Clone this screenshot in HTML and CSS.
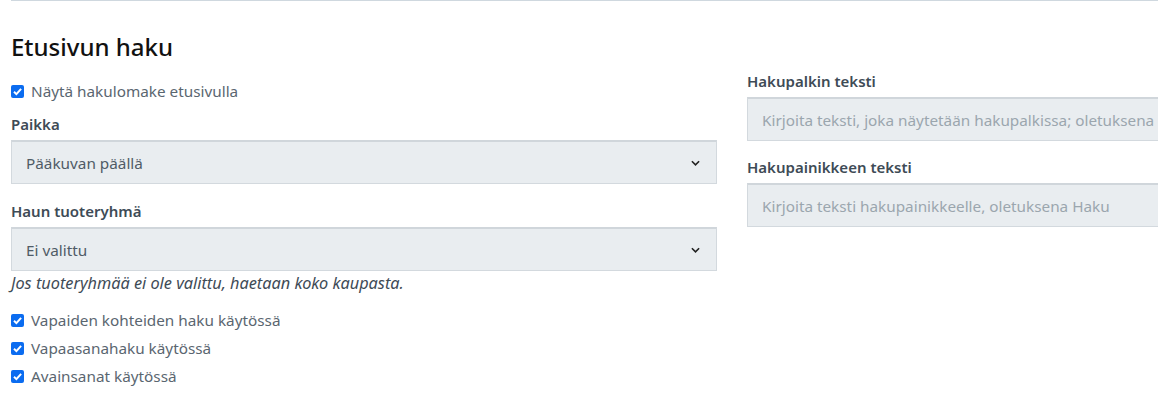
FILE: index.html
```html
<!DOCTYPE html>
<html lang="fi">
<head>
<meta charset="utf-8">
<link rel="stylesheet" href="styles.css">
</head>
<body>
<div class="page">
  <hr class="rule">
  <h2 class="title">Etusivun haku</h2>
  <div class="cols">
    <div class="col">
      <label class="check first"><span class="box"><svg viewBox="0 0 13 13" width="13" height="13"><rect width="13" height="13" rx="2" fill="#0b6cf0"/><path d="M3 6.8 L5.4 9.1 L10.1 3.9" fill="none" stroke="#fff" stroke-width="2"/></svg></span>Näytä hakulomake etusivulla</label>
      <div class="label">Paikka</div>
      <div class="select"><span>Pääkuvan päällä</span><svg class="chev" viewBox="0 0 10 6" width="9" height="6"><path d="M1 1 L5 5 L9 1" fill="none" stroke="#222" stroke-width="1.8"/></svg></div>
      <div class="label gap">Haun tuoteryhmä</div>
      <div class="select"><span>Ei valittu</span><svg class="chev" viewBox="0 0 10 6" width="9" height="6"><path d="M1 1 L5 5 L9 1" fill="none" stroke="#222" stroke-width="1.8"/></svg></div>
      <div class="help">Jos tuoteryhmää ei ole valittu, haetaan koko kaupasta.</div>
      <div class="checks">
        <label class="check"><span class="box"><svg viewBox="0 0 13 13" width="13" height="13"><rect width="13" height="13" rx="2" fill="#0b6cf0"/><path d="M3 6.8 L5.4 9.1 L10.1 3.9" fill="none" stroke="#fff" stroke-width="2"/></svg></span>Vapaiden kohteiden haku käytössä</label>
        <label class="check"><span class="box"><svg viewBox="0 0 13 13" width="13" height="13"><rect width="13" height="13" rx="2" fill="#0b6cf0"/><path d="M3 6.8 L5.4 9.1 L10.1 3.9" fill="none" stroke="#fff" stroke-width="2"/></svg></span>Vapaasanahaku käytössä</label>
        <label class="check"><span class="box"><svg viewBox="0 0 13 13" width="13" height="13"><rect width="13" height="13" rx="2" fill="#0b6cf0"/><path d="M3 6.8 L5.4 9.1 L10.1 3.9" fill="none" stroke="#fff" stroke-width="2"/></svg></span>Avainsanat käytössä</label>
      </div>
    </div>
    <div class="col right">
      <div class="label">Hakupalkin teksti</div>
      <div class="input">Kirjoita teksti, joka näytetään hakupalkissa; oletuksena Hae tuotteita</div>
      <div class="label">Hakupainikkeen teksti</div>
      <div class="input">Kirjoita teksti hakupainikkeelle, oletuksena Haku</div>
    </div>
  </div>
</div>
</body>
</html>
```

FILE: styles.css
```css
html, body {
  margin: 0;
  padding: 0;
  background: #fff;
  overflow: hidden;
}
body {
  font-family: "Noto Sans", "Open Sans", sans-serif;
  font-size: 15.3px;
  color: #4f5b66;
}
.page {
  padding-left: 11px;
  width: 1442px;
}
.rule {
  margin: 0;
  border: 0;
  border-top: 1px solid #cfd8df;
}
.title {
  margin: 30px 0 0;
  font-size: 24px;
  font-weight: 500;
  line-height: 32px;
  color: #111;
}
.cols {
  display: flex;
  gap: 30px;
  margin-top: -8px;
}
.col {
  width: 706px;
  display: flex;
  flex-direction: column;
}
.right {
  padding-top: 16px;
}
.check {
  display: flex;
  align-items: center;
  height: 28px;
  color: #5a6670;
}
.check.first {
  margin-top: 22px;
}
.box {
  display: inline-flex;
  margin-right: 7px;
}
.label {
  font-weight: 600;
  font-size: 15px;
  color: #3e4b56;
  line-height: 20px;
  margin-top: 6px;
  margin-bottom: 6px;
}
.col:first-child > .label:nth-child(2) {
  margin-top: 9px;
}
.right .label:first-child {
  margin-top: 0;
}
.label.gap {
  margin-top: 17px;
}
.select, .input {
  height: 44px;
  box-sizing: border-box;
  background: #e9edf0;
  border: 1px solid #d3d9de;
  border-top: 2px solid #d0d6db;
  display: flex;
  align-items: center;
  padding: 0 14px;
  white-space: nowrap;
  overflow: hidden;
}
.select {
  justify-content: space-between;
  color: #4f5b66;
}
.chev {
  margin-right: 2px;
}
.input {
  color: #9ba6ae;
  margin-bottom: 10px;
}
.help {
  font-style: italic;
  font-size: 16.3px;
  color: #3e4b56;
  line-height: 24px;
  margin-top: 0;
}
.checks {
  margin-top: 11px;
  display: flex;
  flex-direction: column;
}
```
